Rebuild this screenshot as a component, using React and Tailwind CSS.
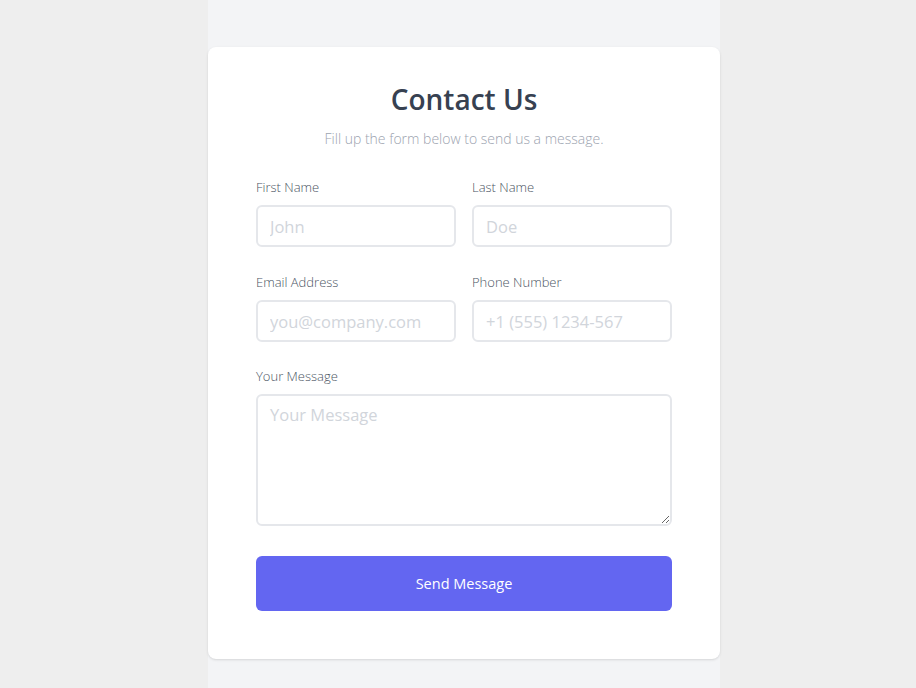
export default function App() {
  const font = { fontFamily: '"Open Sans", "Noto Sans", sans-serif' };
  const inputCls =
    "w-full h-[42px] rounded-md border-2 border-[#e5e7eb] bg-white px-3 text-[16.5px] font-normal text-[#374151] placeholder-[#d1d5db] outline-none";
  const labelCls = "block text-[13px] leading-5 font-light text-[#4b5563]";
  return (
    <div className="min-h-screen bg-[#eeeeee] flex justify-center pl-3" style={font}>
      <div className="w-[512px] bg-[#f3f4f6] pt-[47px] pb-[29px]">
        <div className="bg-white rounded-lg shadow-sm px-12 pt-[34px] pb-[48px]">
          <h1 className="text-center text-[28px] leading-9 font-semibold text-[#374151]">Contact Us</h1>
          <p className="mt-[10px] text-center text-[14px] leading-6 font-light text-[#9ca3af]">
            Fill up the form below to send us a message.
          </p>
          <form className="mt-[26px]" onSubmit={(e) => e.preventDefault()}>
            <div className="grid grid-cols-2 gap-x-4">
              <div>
                <label className={labelCls}>First Name</label>
                <input className={inputCls + " mt-[8px]"} placeholder="John" />
              </div>
              <div>
                <label className={labelCls}>Last Name</label>
                <input className={inputCls + " mt-[8px]"} placeholder="Doe" />
              </div>
            </div>
            <div className="grid grid-cols-2 gap-x-4 mt-[25px]">
              <div>
                <label className={labelCls}>Email Address</label>
                <input className={inputCls + " mt-[8px]"} placeholder="you@company.com" />
              </div>
              <div>
                <label className={labelCls}>Phone Number</label>
                <input className={inputCls + " mt-[8px]"} placeholder="+1 (555) 1234-567" />
              </div>
            </div>
            <div className="mt-[24px]">
              <label className={labelCls}>Your Message</label>
              <textarea
                className="mt-[8px] block w-full h-[132px] rounded-md border-2 border-[#e5e7eb] bg-white px-3 py-[7px] text-[16.5px] font-normal text-[#374151] placeholder-[#d1d5db] outline-none"
                placeholder="Your Message"
              />
            </div>
            <button
              type="submit"
              className="mt-[30px] w-full h-[55px] rounded-md bg-[#6366f1] text-white text-[14.5px]"
            >
              Send Message
            </button>
          </form>
        </div>
      </div>
    </div>
  );
}
